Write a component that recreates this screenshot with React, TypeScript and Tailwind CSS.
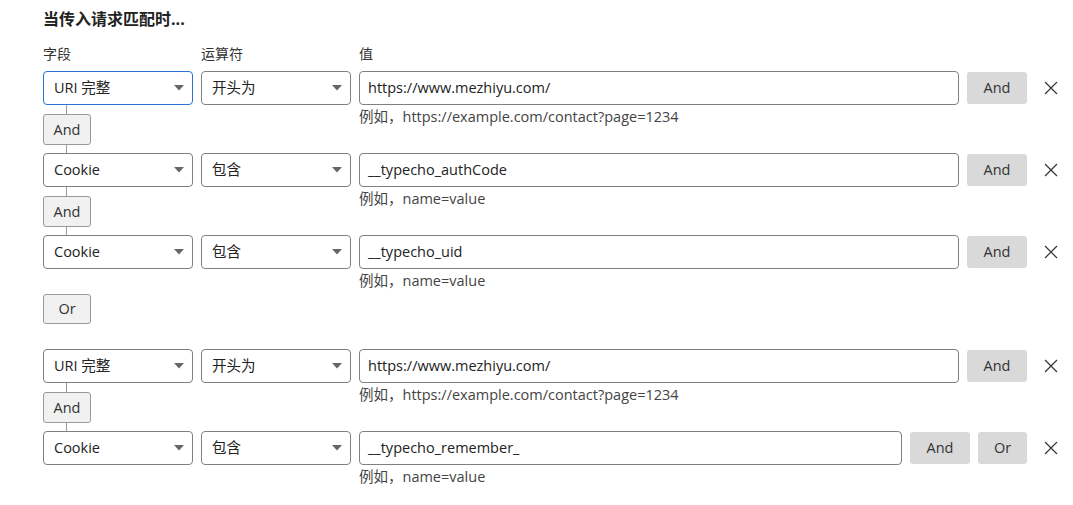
import React from "react";

const FONT = '"Segoe UI", "Open Sans", "Noto Sans CJK SC", sans-serif';

type Rule = {
  field: string;
  op: string;
  value: string;
  hint: string;
  focused?: boolean;
  buttons: string[];
  connector?: "And" | null;
};

function Arrow() {
  return (
    <svg width="10" height="6" viewBox="0 0 10 6" className="shrink-0">
      <path d="M0 0 L10 0 L5 5.5 Z" fill="#666" />
    </svg>
  );
}

function Select({ text, focused }: { text: string; focused?: boolean }) {
  return (
    <div
      className={`h-[34px] w-[150px] rounded-[4px] border bg-white pl-[10px] pr-[8px] flex items-center justify-between text-[14.5px] text-[#222] ${
        focused ? "border-[#2b74d6]" : "border-[#808080]"
      }`}
    >
      <span>{text}</span>
      <Arrow />
    </div>
  );
}

function XIcon() {
  return (
    <svg width="14" height="14" viewBox="0 0 14 14">
      <path d="M1 1 L13 13 M13 1 L1 13" stroke="#333" strokeWidth="1.2" />
    </svg>
  );
}

function RuleBlock({ rule }: { rule: Rule }) {
  return (
    <div className="grid grid-cols-[150px_150px_1fr] gap-x-2">
      <Select text={rule.field} focused={rule.focused} />
      <Select text={rule.op} />
      <div className="flex items-center gap-2">
        <div className="h-[34px] flex-1 rounded-[4px] border border-[#808080] bg-white pl-[8px] flex items-center text-[14.5px] text-[#222]">
          {rule.value}
        </div>
        {rule.buttons.map((b) => (
          <div
            key={b}
            className={`h-[32px] ${b === "And" ? "w-[60px]" : "w-[49px]"} rounded-[3px] bg-[#d9d9d9] flex items-center justify-center text-[14.5px] text-[#333]`}
          >
            {b}
          </div>
        ))}
        <div className="w-[32px] h-[34px] flex items-center justify-center">
          <XIcon />
        </div>
      </div>
      <div>
        {rule.connector ? (
          <div className="flex flex-col">
            <div className="ml-[23px] h-[9px] w-px bg-[#999]" />
            <div className="h-[31px] w-[48px] rounded-[3px] border border-[#999] bg-[#f1f1f1] flex items-center justify-center text-[14.5px] text-[#333]">
              {rule.connector}
            </div>
            <div className="ml-[23px] h-[8px] w-px bg-[#999]" />
          </div>
        ) : null}
      </div>
      <div />
      <div className="text-[14.5px] leading-[24px] text-[#444]">{rule.hint}</div>
    </div>
  );
}

export default function App() {
  const uriHint = "例如，https://example.com/contact?page=1234";
  const cookieHint = "例如，name=value";
  const group1: Rule[] = [
    { field: "URI 完整", op: "开头为", value: "https://www.mezhiyu.com/", hint: uriHint, focused: true, buttons: ["And"], connector: "And" },
    { field: "Cookie", op: "包含", value: "__typecho_authCode", hint: cookieHint, buttons: ["And"], connector: "And" },
    { field: "Cookie", op: "包含", value: "__typecho_uid", hint: cookieHint, buttons: ["And"], connector: null },
  ];
  const group2: Rule[] = [
    { field: "URI 完整", op: "开头为", value: "https://www.mezhiyu.com/", hint: uriHint, buttons: ["And"], connector: "And" },
    { field: "Cookie", op: "包含", value: "__typecho_remember_", hint: cookieHint, buttons: ["And", "Or"], connector: null },
  ];
  return (
    <div className="min-h-screen bg-white pl-[43px] pr-[6px] pt-[7px]" style={{ fontFamily: FONT }}>
      <div className="text-[16px] font-bold leading-[24px] text-[#222]">当传入请求匹配时...</div>
      <div className="mt-[13px] mb-[7px] flex gap-2 text-[14px] leading-[20px] text-[#333]">
        <div className="w-[150px]">字段</div>
        <div className="w-[150px]">运算符</div>
        <div>值</div>
      </div>
      {group1.map((r, i) => (
        <RuleBlock key={i} rule={r} />
      ))}
      <div className="mt-[1px] mb-[25px] h-[30px] w-[48px] rounded-[3px] border border-[#999] bg-[#f1f1f1] flex items-center justify-center text-[14.5px] text-[#333]">
        Or
      </div>
      {group2.map((r, i) => (
        <RuleBlock key={i} rule={r} />
      ))}
    </div>
  );
}
